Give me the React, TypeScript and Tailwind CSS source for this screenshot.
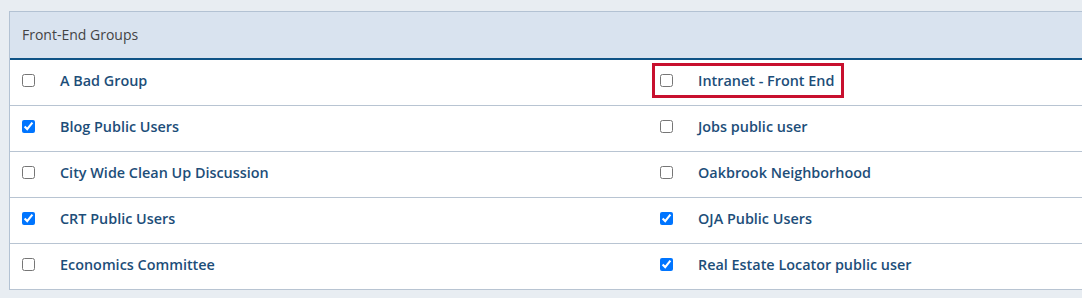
const rows: [string, boolean, string, boolean][] = [
  ['A Bad Group', false, 'Intranet - Front End', false],
  ['Blog Public Users', true, 'Jobs public user', false],
  ['City Wide Clean Up Discussion', false, 'Oakbrook Neighborhood', false],
  ['CRT Public Users', true, 'OJA Public Users', true],
  ['Economics Committee', false, 'Real Estate Locator public user', true],
];

function Cell({ label, checked, highlight }: { label: string; checked: boolean; highlight?: boolean }) {
  return (
    <div className="flex items-center h-[45px] pl-[4px] pb-[4px]">
      <div
        className={
          'flex items-center h-[35px] pl-[5px] pr-[7px] border-[3px] ' +
          (highlight ? 'border-[#c8102e]' : 'border-transparent')
        }>
        <input type="checkbox" defaultChecked={checked} className="m-0 w-[13px] h-[13px]" />
        <span className="ml-[25px] text-[14.4px] font-semibold text-[#1d4e79]">{label}</span>
      </div>
    </div>
  );
}

export default function App() {
  return (
    <div
      className="w-[1082px] h-[298px] bg-[#e8edf2] pt-[11px] pl-[9px] overflow-hidden"
      style={{ fontFamily: '"Open Sans", "Liberation Sans", sans-serif' }}>
      <div className="w-[1100px] bg-white border-l border-t border-[#b3c2d3]">
        <div className="h-[48px] bg-[#d9e3ef] border-b-2 border-[#0f5386] flex items-center pl-[12px] pb-[2px] text-[14px] text-[#444]">
          Front-End Groups
        </div>
        {rows.map(([a, ac, b, bc], i) => (
          <div key={i} className="grid grid-cols-[638px_1fr] border-b border-[#b8c4d2]">
            <Cell label={a} checked={ac} />
            <Cell label={b} checked={bc} highlight={i === 0} />
          </div>
        ))}
      </div>
    </div>
  );
}
